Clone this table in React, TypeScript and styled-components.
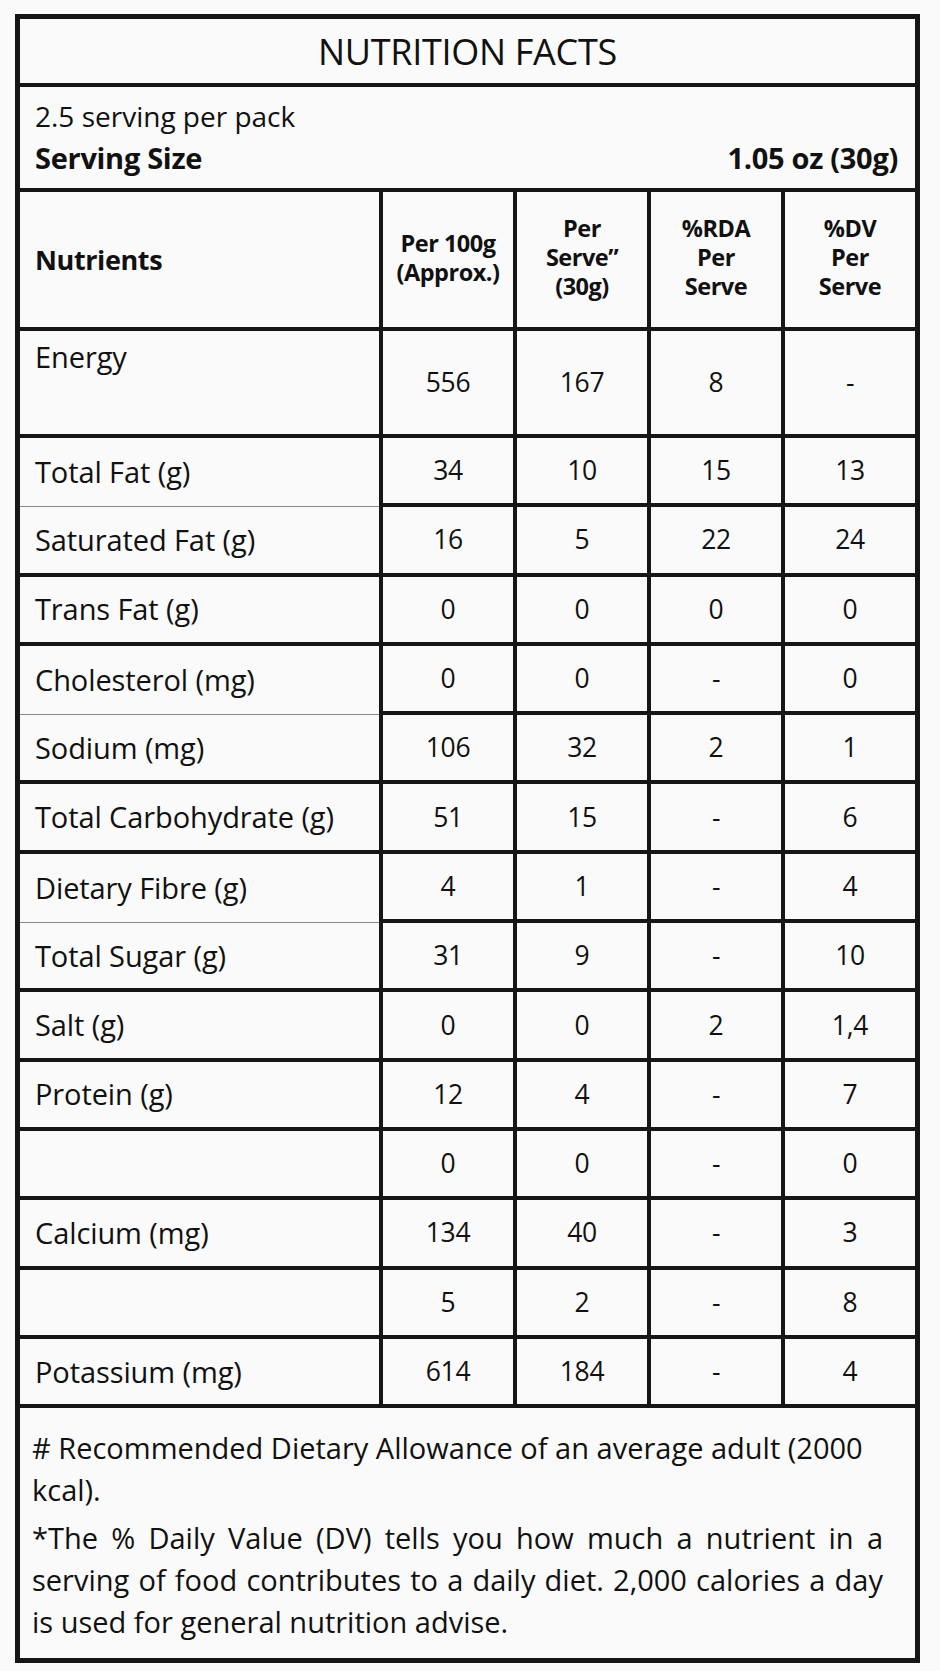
import React from "react"
import styled, { createGlobalStyle } from "styled-components"

type Nutrient = {
  label: string
  values: string[]
  thin?: boolean
}

const LINE = "#161616"

const GlobalStyle = createGlobalStyle`
  body {
    margin: 0;
    background: #fafafa;
    color: #111;
    font-family: "Open Sans", "Noto Sans", sans-serif;
    font-weight: 500;
  }
`

const Page = styled.div`
  padding: 14px 0 7px 15px;
`

const Panel = styled.div`
  box-sizing: border-box;
  width: 905px;
  border: 5px solid ${LINE};
  display: flex;
  flex-direction: column;
`

const Title = styled.h1`
  margin: 0;
  height: 64px;
  border-bottom: 4px solid ${LINE};
  display: flex;
  align-items: center;
  justify-content: center;
  font-size: 36px;
  font-weight: 500;
  letter-spacing: -0.3px;
`

const Serving = styled.div`
  box-sizing: border-box;
  height: 105px;
  padding: 8px 17px 0 15px;
  border-bottom: 4px solid ${LINE};
`

const ServingLine = styled.div<{ $bold?: boolean }>`
  display: flex;
  justify-content: space-between;
  font-size: ${(p) => (p.$bold ? "29px" : "28px")};
  line-height: 42px;
  font-weight: ${(p) => (p.$bold ? 700 : 500)};
  letter-spacing: ${(p) => (p.$bold ? "-0.3px" : "0")};
`

const Row = styled.div<{ $height: number }>`
  display: grid;
  grid-template-columns: 359px repeat(4, 1fr);
  height: ${(p) => p.$height}px;
`

const LabelCell = styled.div<{ $thin?: boolean; $top?: boolean; $head?: boolean }>`
  box-sizing: border-box;
  display: flex;
  align-items: ${(p) => (p.$top ? "flex-start" : "center")};
  padding: ${(p) => (p.$top ? "6px" : "0")} 10px 0 15px;
  border-bottom: ${(p) => (p.$thin ? "1px solid #8a8a8a" : `4px solid ${LINE}`)};
  font-size: ${(p) => (p.$head ? "27px" : "29px")};
  font-weight: ${(p) => (p.$head ? 700 : 500)};
  letter-spacing: ${(p) => (p.$head ? "-0.4px" : "-0.1px")};
  line-height: 40px;
`

const ValueCell = styled.div<{ $head?: boolean }>`
  box-sizing: border-box;
  display: flex;
  align-items: center;
  justify-content: center;
  text-align: center;
  border-left: 4px solid ${LINE};
  border-bottom: 4px solid ${LINE};
  font-size: ${(p) => (p.$head ? "23.5px" : "26.5px")};
  font-weight: ${(p) => (p.$head ? 700 : 500)};
  letter-spacing: ${(p) => (p.$head ? "-0.5px" : "-0.3px")};
  line-height: 29px;
`

const HeadLines = styled.div`
  margin-top: -4px;
`

const Footnote = styled.div`
  padding: 19px 32px 15px 12px;
  font-size: 29px;
  line-height: 42px;
`

const Note = styled.p<{ $justify?: boolean }>`
  margin: 0;
  text-align: ${(p) => (p.$justify ? "justify" : "left")};
  & + & {
    margin-top: 6px;
  }
`

const headers = [
  ["Per 100g", "(Approx.)"],
  ["Per", "Serve\u201d", "(30g)"],
  ["%RDA", "Per", "Serve"],
  ["%DV", "Per", "Serve"],
]

const rows: Nutrient[] = [
  { label: "Total Fat (g)", values: ["34", "10", "15", "13"], thin: true },
  { label: "Saturated Fat (g)", values: ["16", "5", "22", "24"] },
  { label: "Trans Fat (g)", values: ["0", "0", "0", "0"] },
  { label: "Cholesterol (mg)", values: ["0", "0", "-", "0"], thin: true },
  { label: "Sodium (mg)", values: ["106", "32", "2", "1"] },
  { label: "Total Carbohydrate (g)", values: ["51", "15", "-", "6"] },
  { label: "Dietary Fibre (g)", values: ["4", "1", "-", "4"], thin: true },
  { label: "Total Sugar (g)", values: ["31", "9", "-", "10"] },
  { label: "Salt (g)", values: ["0", "0", "2", "1,4"] },
  { label: "Protein (g)", values: ["12", "4", "-", "7"] },
  { label: "", values: ["0", "0", "-", "0"] },
  { label: "Calcium (mg)", values: ["134", "40", "-", "3"] },
  { label: "", values: ["5", "2", "-", "8"] },
  { label: "Potassium (mg)", values: ["614", "184", "-", "4"] },
]

const App: React.FC = () => (
  <Page>
    <GlobalStyle />
    <Panel>
      <Title>NUTRITION FACTS</Title>
      <Serving>
        <ServingLine>2.5 serving per pack</ServingLine>
        <ServingLine $bold>
          <span>Serving Size</span>
          <span>1.05 oz (30g)</span>
        </ServingLine>
      </Serving>

      <Row $height={139}>
        <LabelCell $head>Nutrients</LabelCell>
        {headers.map((lines, i) => (
          <ValueCell $head key={i}>
            <HeadLines>
              {lines.map((l) => (
                <div key={l}>{l}</div>
              ))}
            </HeadLines>
          </ValueCell>
        ))}
      </Row>

      <Row $height={107}>
        <LabelCell $top>Energy</LabelCell>
        <ValueCell>556</ValueCell>
        <ValueCell>167</ValueCell>
        <ValueCell>8</ValueCell>
        <ValueCell>-</ValueCell>
      </Row>

      {rows.map((r, i) => (
        <Row $height={69.3} key={i}>
          <LabelCell $thin={r.thin}>{r.label}</LabelCell>
          {r.values.map((v, j) => (
            <ValueCell key={j}>{v}</ValueCell>
          ))}
        </Row>
      ))}

      <Footnote>
        <Note># Recommended Dietary Allowance of an average adult (2000 kcal).</Note>
        <Note $justify>
          *The % Daily Value (DV) tells you how much a nutrient in a serving of food
          contributes to a daily diet. 2,000 calories a day is used for general
          nutrition advise.
        </Note>
      </Footnote>
    </Panel>
  </Page>
)

export default App
